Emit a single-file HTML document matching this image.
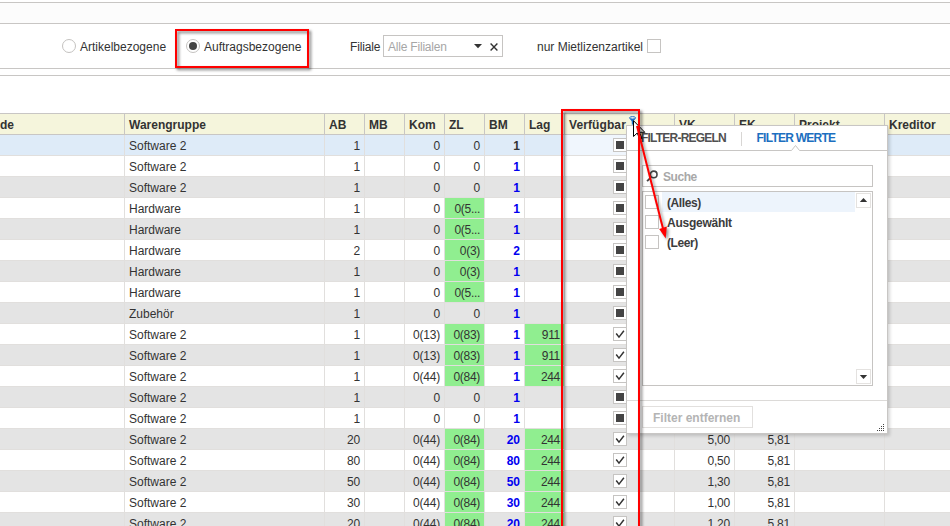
<!DOCTYPE html>
<html lang="de"><head><meta charset="utf-8"><title>Filter Verfügbar</title>
<style>
html,body{margin:0;padding:0}
body{width:950px;height:526px;overflow:hidden;background:#fff;position:relative;font-family:"Liberation Sans",sans-serif;font-size:12px;color:#333}
div,span,b,i{box-sizing:border-box}
.abs{position:absolute}
.hl{position:absolute;left:0;width:950px;height:1px;background:#c8c6c4}
.t{position:absolute;white-space:nowrap;line-height:16px;height:16px;margin-top:1px}
/* table */
.th{position:absolute;top:113px;height:22px;border-top:1px solid #c8c6c4;border-bottom:1px solid #c8c6c4;border-left:1px solid #c8c6c4;background:#f5f5dc;font-weight:700;line-height:22px;padding-left:4px;white-space:nowrap;overflow:hidden;color:#333}
.row{position:absolute;left:0;width:950px;height:21px;background:#fff;border-bottom:1px solid #e1dfdd}
.row.g{background:#e4e4e4}
.row.sel{background:#deebf8}
.row b{position:absolute;top:0;width:1px;height:21px;background:#e1dfdd}
.c{position:absolute;top:0;height:20px;line-height:22px;white-space:nowrap;overflow:hidden}
.c.l{padding-left:4px}
.c.r{text-align:right;padding-right:4px;letter-spacing:-.2px}
.c.gr{background:#90ee90;letter-spacing:-.3px}
.c.bm{font-weight:700;color:#0000f0;padding-right:4.4px}
.sel .c.bm{color:#333}
.c.foc{background:#f0f6fd}
.cb{position:absolute;left:613px;top:3px;width:14px;height:14px;border:1px solid #c6c4c2;background:#fff}
.cb i{position:absolute;left:2px;top:2px;width:8px;height:8px;background:#444}
.cb svg{position:absolute;left:0;top:0}
</style></head><body>
<!-- top bands -->
<div class="hl" style="top:2px"></div>
<div class="abs" style="left:0;top:3px;width:950px;height:20px;background:#fcfcfc"></div>
<div class="hl" style="top:23px"></div>
<div class="hl" style="top:68px"></div>
<div class="hl" style="top:75px"></div>
<!-- radios -->
<div class="abs" style="left:62px;top:39px;width:14px;height:14px;border:1px solid #c4c2c0;border-radius:50%;background:#fff"></div>
<span class="t" id="t1" style="left:80px;top:38px">Artikelbezogene</span>
<div class="abs" style="left:186px;top:39px;width:14px;height:14px;border:1px solid #c4c2c0;border-radius:50%;background:#fff"><div class="abs" style="left:2px;top:2px;width:8px;height:8px;border-radius:50%;background:#444"></div></div>
<span class="t" id="t2" style="left:204px;top:38px">Auftragsbezogene</span>
<span class="t" id="t3" style="left:350px;top:38px;letter-spacing:-.15px">Filiale</span>
<div class="abs" style="left:383px;top:35px;width:120px;height:22px;border:1px solid #c6c4c2;background:#fff"></div>
<span class="t" id="t4" style="left:388px;top:38px;color:#a6a6a6;letter-spacing:-.2px">Alle Filialen</span>
<svg class="abs" style="left:473px;top:42px" width="10" height="8" viewBox="0 0 10 8"><path d="M1 2 L9 2 L5 6.2 Z" fill="#333"/></svg>
<svg class="abs" style="left:489px;top:41.6px" width="10" height="10" viewBox="0 0 10 10"><path d="M1.6 1.6 L8.4 8.4 M8.4 1.6 L1.6 8.4" stroke="#333" stroke-width="1.4" fill="none"/></svg>
<span class="t" id="t5" style="left:537px;top:38px">nur Mietlizenzartikel</span>
<div class="abs" style="left:647px;top:39px;width:14px;height:14px;border:1px solid #c6c4c2;background:#fff"></div>
<!-- red box around radio -->
<div class="abs" style="left:175px;top:29px;width:134px;height:39px;border:2px solid #ff0000;filter:drop-shadow(2px 2px 1.6px rgba(0,0,0,.55))"></div>
<!-- table header -->
<div class="th" style="left:-1px;width:125px;padding-left:0px">de</div>
<div class="th" style="left:124px;width:200px">Warengruppe</div>
<div class="th" style="left:324px;width:40px">AB</div>
<div class="th" style="left:364px;width:40px">MB</div>
<div class="th" style="left:404px;width:40px">Kom</div>
<div class="th" style="left:444px;width:40px">ZL</div>
<div class="th" style="left:484px;width:40px">BM</div>
<div class="th" style="left:524px;width:40px">Lag</div>
<div class="th" style="left:564px;width:110px;letter-spacing:.1px">Verfügbar</div>
<div class="th" style="left:674px;width:60px">VK</div>
<div class="th" style="left:734px;width:60px">EK</div>
<div class="th" style="left:794px;width:90px">Projekt</div>
<div class="th" style="left:884px;width:70px">Kreditor</div>
<!-- filter icon -->
<svg class="abs" style="left:628px;top:115px" width="10" height="11" viewBox="0 0 10 11"><path d="M1.3 3.3 L4.6 7.2 L7.9 3.3 Z" fill="#1b6fc6"/><rect x="3.8" y="5" width="1.7" height="4.6" fill="#1b6fc6"/><ellipse cx="4.55" cy="2.85" rx="3" ry="1.25" fill="#eef3ee" stroke="#1b6fc6" stroke-width="1"/></svg>
<!-- rows -->
<div class="row sel" style="top:135px"><div class="c l" style="left:125px;width:199px">Software 2</div><div class="c r" style="left:325px;width:39px">1</div><div class="c r" style="left:405px;width:39px">0</div><div class="c r" style="left:445px;width:39px">0</div><div class="c r bm" style="left:485px;width:39px">1</div><div class="c foc" style="left:565px;width:109px"></div><div class="cb"><i></i></div><b style="left:124px"></b><b style="left:324px"></b><b style="left:364px"></b><b style="left:404px"></b><b style="left:444px"></b><b style="left:484px"></b><b style="left:524px"></b><b style="left:564px"></b><b style="left:674px"></b><b style="left:734px"></b><b style="left:794px"></b><b style="left:884px"></b></div>
<div class="row" style="top:156px"><div class="c l" style="left:125px;width:199px">Software 2</div><div class="c r" style="left:325px;width:39px">1</div><div class="c r" style="left:405px;width:39px">0</div><div class="c r" style="left:445px;width:39px">0</div><div class="c r bm" style="left:485px;width:39px">1</div><div class="cb"><i></i></div><b style="left:124px"></b><b style="left:324px"></b><b style="left:364px"></b><b style="left:404px"></b><b style="left:444px"></b><b style="left:484px"></b><b style="left:524px"></b><b style="left:564px"></b><b style="left:674px"></b><b style="left:734px"></b><b style="left:794px"></b><b style="left:884px"></b></div>
<div class="row g" style="top:177px"><div class="c l" style="left:125px;width:199px">Software 2</div><div class="c r" style="left:325px;width:39px">1</div><div class="c r" style="left:405px;width:39px">0</div><div class="c r" style="left:445px;width:39px">0</div><div class="c r bm" style="left:485px;width:39px">1</div><div class="cb"><i></i></div><b style="left:124px"></b><b style="left:324px"></b><b style="left:364px"></b><b style="left:404px"></b><b style="left:444px"></b><b style="left:484px"></b><b style="left:524px"></b><b style="left:564px"></b><b style="left:674px"></b><b style="left:734px"></b><b style="left:794px"></b><b style="left:884px"></b></div>
<div class="row" style="top:198px"><div class="c l" style="left:125px;width:199px">Hardware</div><div class="c r" style="left:325px;width:39px">1</div><div class="c r" style="left:405px;width:39px">0</div><div class="c r gr" style="left:445px;width:39px">0(5...</div><div class="c r bm" style="left:485px;width:39px">1</div><div class="cb"><i></i></div><b style="left:124px"></b><b style="left:324px"></b><b style="left:364px"></b><b style="left:404px"></b><b style="left:444px"></b><b style="left:484px"></b><b style="left:524px"></b><b style="left:564px"></b><b style="left:674px"></b><b style="left:734px"></b><b style="left:794px"></b><b style="left:884px"></b></div>
<div class="row g" style="top:219px"><div class="c l" style="left:125px;width:199px">Hardware</div><div class="c r" style="left:325px;width:39px">1</div><div class="c r" style="left:405px;width:39px">0</div><div class="c r gr" style="left:445px;width:39px">0(5...</div><div class="c r bm" style="left:485px;width:39px">1</div><div class="cb"><i></i></div><b style="left:124px"></b><b style="left:324px"></b><b style="left:364px"></b><b style="left:404px"></b><b style="left:444px"></b><b style="left:484px"></b><b style="left:524px"></b><b style="left:564px"></b><b style="left:674px"></b><b style="left:734px"></b><b style="left:794px"></b><b style="left:884px"></b></div>
<div class="row" style="top:240px"><div class="c l" style="left:125px;width:199px">Hardware</div><div class="c r" style="left:325px;width:39px">2</div><div class="c r" style="left:405px;width:39px">0</div><div class="c r gr" style="left:445px;width:39px">0(3)</div><div class="c r bm" style="left:485px;width:39px">2</div><div class="cb"><i></i></div><b style="left:124px"></b><b style="left:324px"></b><b style="left:364px"></b><b style="left:404px"></b><b style="left:444px"></b><b style="left:484px"></b><b style="left:524px"></b><b style="left:564px"></b><b style="left:674px"></b><b style="left:734px"></b><b style="left:794px"></b><b style="left:884px"></b></div>
<div class="row g" style="top:261px"><div class="c l" style="left:125px;width:199px">Hardware</div><div class="c r" style="left:325px;width:39px">1</div><div class="c r" style="left:405px;width:39px">0</div><div class="c r gr" style="left:445px;width:39px">0(3)</div><div class="c r bm" style="left:485px;width:39px">1</div><div class="cb"><i></i></div><b style="left:124px"></b><b style="left:324px"></b><b style="left:364px"></b><b style="left:404px"></b><b style="left:444px"></b><b style="left:484px"></b><b style="left:524px"></b><b style="left:564px"></b><b style="left:674px"></b><b style="left:734px"></b><b style="left:794px"></b><b style="left:884px"></b></div>
<div class="row" style="top:282px"><div class="c l" style="left:125px;width:199px">Hardware</div><div class="c r" style="left:325px;width:39px">1</div><div class="c r" style="left:405px;width:39px">0</div><div class="c r gr" style="left:445px;width:39px">0(5...</div><div class="c r bm" style="left:485px;width:39px">1</div><div class="cb"><i></i></div><b style="left:124px"></b><b style="left:324px"></b><b style="left:364px"></b><b style="left:404px"></b><b style="left:444px"></b><b style="left:484px"></b><b style="left:524px"></b><b style="left:564px"></b><b style="left:674px"></b><b style="left:734px"></b><b style="left:794px"></b><b style="left:884px"></b></div>
<div class="row g" style="top:303px"><div class="c l" style="left:125px;width:199px">Zubehör</div><div class="c r" style="left:325px;width:39px">1</div><div class="c r" style="left:405px;width:39px">0</div><div class="c r" style="left:445px;width:39px">0</div><div class="c r bm" style="left:485px;width:39px">1</div><div class="cb"><i></i></div><b style="left:124px"></b><b style="left:324px"></b><b style="left:364px"></b><b style="left:404px"></b><b style="left:444px"></b><b style="left:484px"></b><b style="left:524px"></b><b style="left:564px"></b><b style="left:674px"></b><b style="left:734px"></b><b style="left:794px"></b><b style="left:884px"></b></div>
<div class="row" style="top:324px"><div class="c l" style="left:125px;width:199px">Software 2</div><div class="c r" style="left:325px;width:39px">1</div><div class="c r" style="left:405px;width:39px">0(13)</div><div class="c r gr" style="left:445px;width:39px">0(83)</div><div class="c r bm" style="left:485px;width:39px">1</div><div class="c r gr" style="left:525px;width:39px">911</div><div class="cb"><svg width="12" height="12" viewBox="0 0 12 12"><path d="M2.2 5.5 L5 9.1 L9.9 2.8" fill="none" stroke="#333" stroke-width="1.5"/></svg></div><b style="left:124px"></b><b style="left:324px"></b><b style="left:364px"></b><b style="left:404px"></b><b style="left:444px"></b><b style="left:484px"></b><b style="left:524px"></b><b style="left:564px"></b><b style="left:674px"></b><b style="left:734px"></b><b style="left:794px"></b><b style="left:884px"></b></div>
<div class="row g" style="top:345px"><div class="c l" style="left:125px;width:199px">Software 2</div><div class="c r" style="left:325px;width:39px">1</div><div class="c r" style="left:405px;width:39px">0(13)</div><div class="c r gr" style="left:445px;width:39px">0(83)</div><div class="c r bm" style="left:485px;width:39px">1</div><div class="c r gr" style="left:525px;width:39px">911</div><div class="cb"><svg width="12" height="12" viewBox="0 0 12 12"><path d="M2.2 5.5 L5 9.1 L9.9 2.8" fill="none" stroke="#333" stroke-width="1.5"/></svg></div><b style="left:124px"></b><b style="left:324px"></b><b style="left:364px"></b><b style="left:404px"></b><b style="left:444px"></b><b style="left:484px"></b><b style="left:524px"></b><b style="left:564px"></b><b style="left:674px"></b><b style="left:734px"></b><b style="left:794px"></b><b style="left:884px"></b></div>
<div class="row" style="top:366px"><div class="c l" style="left:125px;width:199px">Software 2</div><div class="c r" style="left:325px;width:39px">1</div><div class="c r" style="left:405px;width:39px">0(44)</div><div class="c r gr" style="left:445px;width:39px">0(84)</div><div class="c r bm" style="left:485px;width:39px">1</div><div class="c r gr" style="left:525px;width:39px">244</div><div class="cb"><svg width="12" height="12" viewBox="0 0 12 12"><path d="M2.2 5.5 L5 9.1 L9.9 2.8" fill="none" stroke="#333" stroke-width="1.5"/></svg></div><b style="left:124px"></b><b style="left:324px"></b><b style="left:364px"></b><b style="left:404px"></b><b style="left:444px"></b><b style="left:484px"></b><b style="left:524px"></b><b style="left:564px"></b><b style="left:674px"></b><b style="left:734px"></b><b style="left:794px"></b><b style="left:884px"></b></div>
<div class="row g" style="top:387px"><div class="c l" style="left:125px;width:199px">Software 2</div><div class="c r" style="left:325px;width:39px">1</div><div class="c r" style="left:405px;width:39px">0</div><div class="c r" style="left:445px;width:39px">0</div><div class="c r bm" style="left:485px;width:39px">1</div><div class="cb"><i></i></div><b style="left:124px"></b><b style="left:324px"></b><b style="left:364px"></b><b style="left:404px"></b><b style="left:444px"></b><b style="left:484px"></b><b style="left:524px"></b><b style="left:564px"></b><b style="left:674px"></b><b style="left:734px"></b><b style="left:794px"></b><b style="left:884px"></b></div>
<div class="row" style="top:408px"><div class="c l" style="left:125px;width:199px">Software 2</div><div class="c r" style="left:325px;width:39px">1</div><div class="c r" style="left:405px;width:39px">0</div><div class="c r" style="left:445px;width:39px">0</div><div class="c r bm" style="left:485px;width:39px">1</div><div class="cb"><i></i></div><b style="left:124px"></b><b style="left:324px"></b><b style="left:364px"></b><b style="left:404px"></b><b style="left:444px"></b><b style="left:484px"></b><b style="left:524px"></b><b style="left:564px"></b><b style="left:674px"></b><b style="left:734px"></b><b style="left:794px"></b><b style="left:884px"></b></div>
<div class="row g" style="top:429px"><div class="c l" style="left:125px;width:199px">Software 2</div><div class="c r" style="left:325px;width:39px">20</div><div class="c r" style="left:405px;width:39px">0(44)</div><div class="c r gr" style="left:445px;width:39px">0(84)</div><div class="c r bm" style="left:485px;width:39px">20</div><div class="c r gr" style="left:525px;width:39px">244</div><div class="cb"><svg width="12" height="12" viewBox="0 0 12 12"><path d="M2.2 5.5 L5 9.1 L9.9 2.8" fill="none" stroke="#333" stroke-width="1.5"/></svg></div><div class="c r" style="left:675px;width:59px">5,00</div><div class="c r" style="left:735px;width:59px">5,81</div><b style="left:124px"></b><b style="left:324px"></b><b style="left:364px"></b><b style="left:404px"></b><b style="left:444px"></b><b style="left:484px"></b><b style="left:524px"></b><b style="left:564px"></b><b style="left:674px"></b><b style="left:734px"></b><b style="left:794px"></b><b style="left:884px"></b></div>
<div class="row" style="top:450px"><div class="c l" style="left:125px;width:199px">Software 2</div><div class="c r" style="left:325px;width:39px">80</div><div class="c r" style="left:405px;width:39px">0(44)</div><div class="c r gr" style="left:445px;width:39px">0(84)</div><div class="c r bm" style="left:485px;width:39px">80</div><div class="c r gr" style="left:525px;width:39px">244</div><div class="cb"><svg width="12" height="12" viewBox="0 0 12 12"><path d="M2.2 5.5 L5 9.1 L9.9 2.8" fill="none" stroke="#333" stroke-width="1.5"/></svg></div><div class="c r" style="left:675px;width:59px">0,50</div><div class="c r" style="left:735px;width:59px">5,81</div><b style="left:124px"></b><b style="left:324px"></b><b style="left:364px"></b><b style="left:404px"></b><b style="left:444px"></b><b style="left:484px"></b><b style="left:524px"></b><b style="left:564px"></b><b style="left:674px"></b><b style="left:734px"></b><b style="left:794px"></b><b style="left:884px"></b></div>
<div class="row g" style="top:471px"><div class="c l" style="left:125px;width:199px">Software 2</div><div class="c r" style="left:325px;width:39px">50</div><div class="c r" style="left:405px;width:39px">0(44)</div><div class="c r gr" style="left:445px;width:39px">0(84)</div><div class="c r bm" style="left:485px;width:39px">50</div><div class="c r gr" style="left:525px;width:39px">244</div><div class="cb"><svg width="12" height="12" viewBox="0 0 12 12"><path d="M2.2 5.5 L5 9.1 L9.9 2.8" fill="none" stroke="#333" stroke-width="1.5"/></svg></div><div class="c r" style="left:675px;width:59px">1,30</div><div class="c r" style="left:735px;width:59px">5,81</div><b style="left:124px"></b><b style="left:324px"></b><b style="left:364px"></b><b style="left:404px"></b><b style="left:444px"></b><b style="left:484px"></b><b style="left:524px"></b><b style="left:564px"></b><b style="left:674px"></b><b style="left:734px"></b><b style="left:794px"></b><b style="left:884px"></b></div>
<div class="row" style="top:492px"><div class="c l" style="left:125px;width:199px">Software 2</div><div class="c r" style="left:325px;width:39px">30</div><div class="c r" style="left:405px;width:39px">0(44)</div><div class="c r gr" style="left:445px;width:39px">0(84)</div><div class="c r bm" style="left:485px;width:39px">30</div><div class="c r gr" style="left:525px;width:39px">244</div><div class="cb"><svg width="12" height="12" viewBox="0 0 12 12"><path d="M2.2 5.5 L5 9.1 L9.9 2.8" fill="none" stroke="#333" stroke-width="1.5"/></svg></div><div class="c r" style="left:675px;width:59px">1,00</div><div class="c r" style="left:735px;width:59px">5,81</div><b style="left:124px"></b><b style="left:324px"></b><b style="left:364px"></b><b style="left:404px"></b><b style="left:444px"></b><b style="left:484px"></b><b style="left:524px"></b><b style="left:564px"></b><b style="left:674px"></b><b style="left:734px"></b><b style="left:794px"></b><b style="left:884px"></b></div>
<div class="row g" style="top:513px"><div class="c l" style="left:125px;width:199px">Software 2</div><div class="c r" style="left:325px;width:39px">20</div><div class="c r" style="left:405px;width:39px">0(44)</div><div class="c r gr" style="left:445px;width:39px">0(84)</div><div class="c r bm" style="left:485px;width:39px">20</div><div class="c r gr" style="left:525px;width:39px">244</div><div class="cb"><svg width="12" height="12" viewBox="0 0 12 12"><path d="M2.2 5.5 L5 9.1 L9.9 2.8" fill="none" stroke="#333" stroke-width="1.5"/></svg></div><div class="c r" style="left:675px;width:59px">1,20</div><div class="c r" style="left:735px;width:59px">5,81</div><b style="left:124px"></b><b style="left:324px"></b><b style="left:364px"></b><b style="left:404px"></b><b style="left:444px"></b><b style="left:484px"></b><b style="left:524px"></b><b style="left:564px"></b><b style="left:674px"></b><b style="left:734px"></b><b style="left:794px"></b><b style="left:884px"></b></div><!-- filter popup -->
<div class="abs" id="pop" style="left:626px;top:125px;width:262px;height:309px;background:#fff;border:1px solid #c8c6c4;box-shadow:2px 2px 3px rgba(0,0,0,.16)">
  <span class="t" id="p1" style="left:14px;top:3px;font-size:12px;font-weight:700;color:#505050;letter-spacing:-.78px">FILTER-REGELN</span>
  <div class="abs" style="left:114px;top:6px;width:1px;height:14px;background:#d8d6d4"></div>
  <span class="t" id="p2" style="left:129.5px;top:3px;font-size:12px;font-weight:700;color:#1c6fc0;letter-spacing:-.74px">FILTER WERTE</span>
  <svg class="abs" style="left:0;top:18px" width="260" height="8" viewBox="0 0 260 8"><path d="M0 6.5 L164.5 6.5 L168.5 1.5 L172.5 6.5 L260 6.5" fill="none" stroke="#c8c6c4" stroke-width="1"/></svg>
  <div class="abs" style="left:15px;top:39px;width:231px;height:22px;border:1px solid #c6c4c2;background:#fff"></div>
  <svg class="abs" style="left:19px;top:44px" width="13" height="13" viewBox="0 0 13 13"><circle cx="7.7" cy="4.4" r="3.3" fill="none" stroke="#444" stroke-width="1.6"/><path d="M5.4 6.8 L1.1 11.1" stroke="#444" stroke-width="1.8" fill="none"/></svg>
  <span class="t" id="p3" style="left:36px;top:42px;font-weight:700;color:#a8a8a8;letter-spacing:-.45px">Suche</span>
  <div class="abs" style="left:15px;top:65px;width:231px;height:195px;border:1px solid #c6c4c2;background:#fff"></div>
  <div class="abs" style="left:35px;top:66px;width:193px;height:20px;background:#edf4fc"></div>
  <div class="abs" style="left:18px;top:69px;width:14px;height:14px;border:1px solid #c6c4c2;background:#fff"></div>
  <div class="abs" style="left:18px;top:89px;width:14px;height:14px;border:1px solid #c6c4c2;background:#fff"></div>
  <div class="abs" style="left:18px;top:109px;width:14px;height:14px;border:1px solid #c6c4c2;background:#fff"></div>
  <span class="t" id="p4" style="left:40px;top:68px;font-weight:700;color:#3c3c3c;letter-spacing:-.4px">(Alles)</span>
  <span class="t" id="p5" style="left:40px;top:88px;font-weight:700;color:#3c3c3c;letter-spacing:-.25px">Ausgewählt</span>
  <span class="t" id="p6" style="left:40px;top:108px;font-weight:700;color:#3c3c3c;letter-spacing:-.4px">(Leer)</span>
  <div class="abs" style="left:229px;top:67px;width:15px;height:15px;border:1px solid #e4e2e0;background:#fff"></div>
  <svg class="abs" style="left:232px;top:71px" width="9" height="6" viewBox="0 0 9 6"><path d="M0.8 5 L4.5 1 L8.2 5 Z" fill="#333"/></svg>
  <div class="abs" style="left:229px;top:243px;width:15px;height:15px;border:1px solid #e4e2e0;background:#fff"></div>
  <svg class="abs" style="left:232px;top:248px" width="9" height="6" viewBox="0 0 9 6"><path d="M0.8 1 L4.5 5 L8.2 1 Z" fill="#333"/></svg>
  <div class="abs" style="left:0;top:274px;width:260px;height:1px;background:#dcdad8"></div>
  <div class="abs" style="left:15px;top:280px;width:111px;height:22px;border:1px solid #e2e0de;background:#fff"></div>
  <span class="t" id="p7" style="left:26px;top:283px;font-weight:700;color:#b4b4b4">Filter entfernen</span>
  <svg class="abs" style="left:249px;top:297px" width="9" height="9" viewBox="0 0 9 9" shape-rendering="crispEdges"><g fill="#444"><rect x="7" y="1" width="1" height="1"/><rect x="5" y="3" width="1" height="1"/><rect x="7" y="3" width="1" height="1"/><rect x="3" y="5" width="1" height="1"/><rect x="5" y="5" width="1" height="1"/><rect x="7" y="5" width="1" height="1"/><rect x="1" y="7" width="1" height="1"/><rect x="3" y="7" width="1" height="1"/><rect x="5" y="7" width="1" height="1"/><rect x="7" y="7" width="1" height="1"/></g></svg>
</div>
<!-- mouse cursor -->
<svg class="abs" style="left:632px;top:119px" width="15" height="23" viewBox="0 0 15 23"><path d="M1.5 1.7 L1.5 17.5 L5.2 14 L7.9 20.3 L10 19.4 L7.4 13.3 L12.8 13.3 Z" fill="#fff" stroke="#000" stroke-width="1" stroke-linejoin="miter"/></svg>
<!-- annotations -->
<div class="abs" style="left:561px;top:109px;width:79px;height:440px;border:2px solid #ff0000;filter:drop-shadow(2px 2px 1.6px rgba(0,0,0,.55))"></div>
<svg class="abs" style="left:620px;top:110px;filter:drop-shadow(2px 2px 1.5px rgba(0,0,0,.4))" width="70" height="140" viewBox="0 0 70 140"><path d="M17 16 L43.6 121" stroke="#ff0000" stroke-width="2" fill="none"/><path d="M45.7 128.6 L39.2 119 L46.8 116.6 Z" fill="#ff0000"/></svg>
</body></html>
